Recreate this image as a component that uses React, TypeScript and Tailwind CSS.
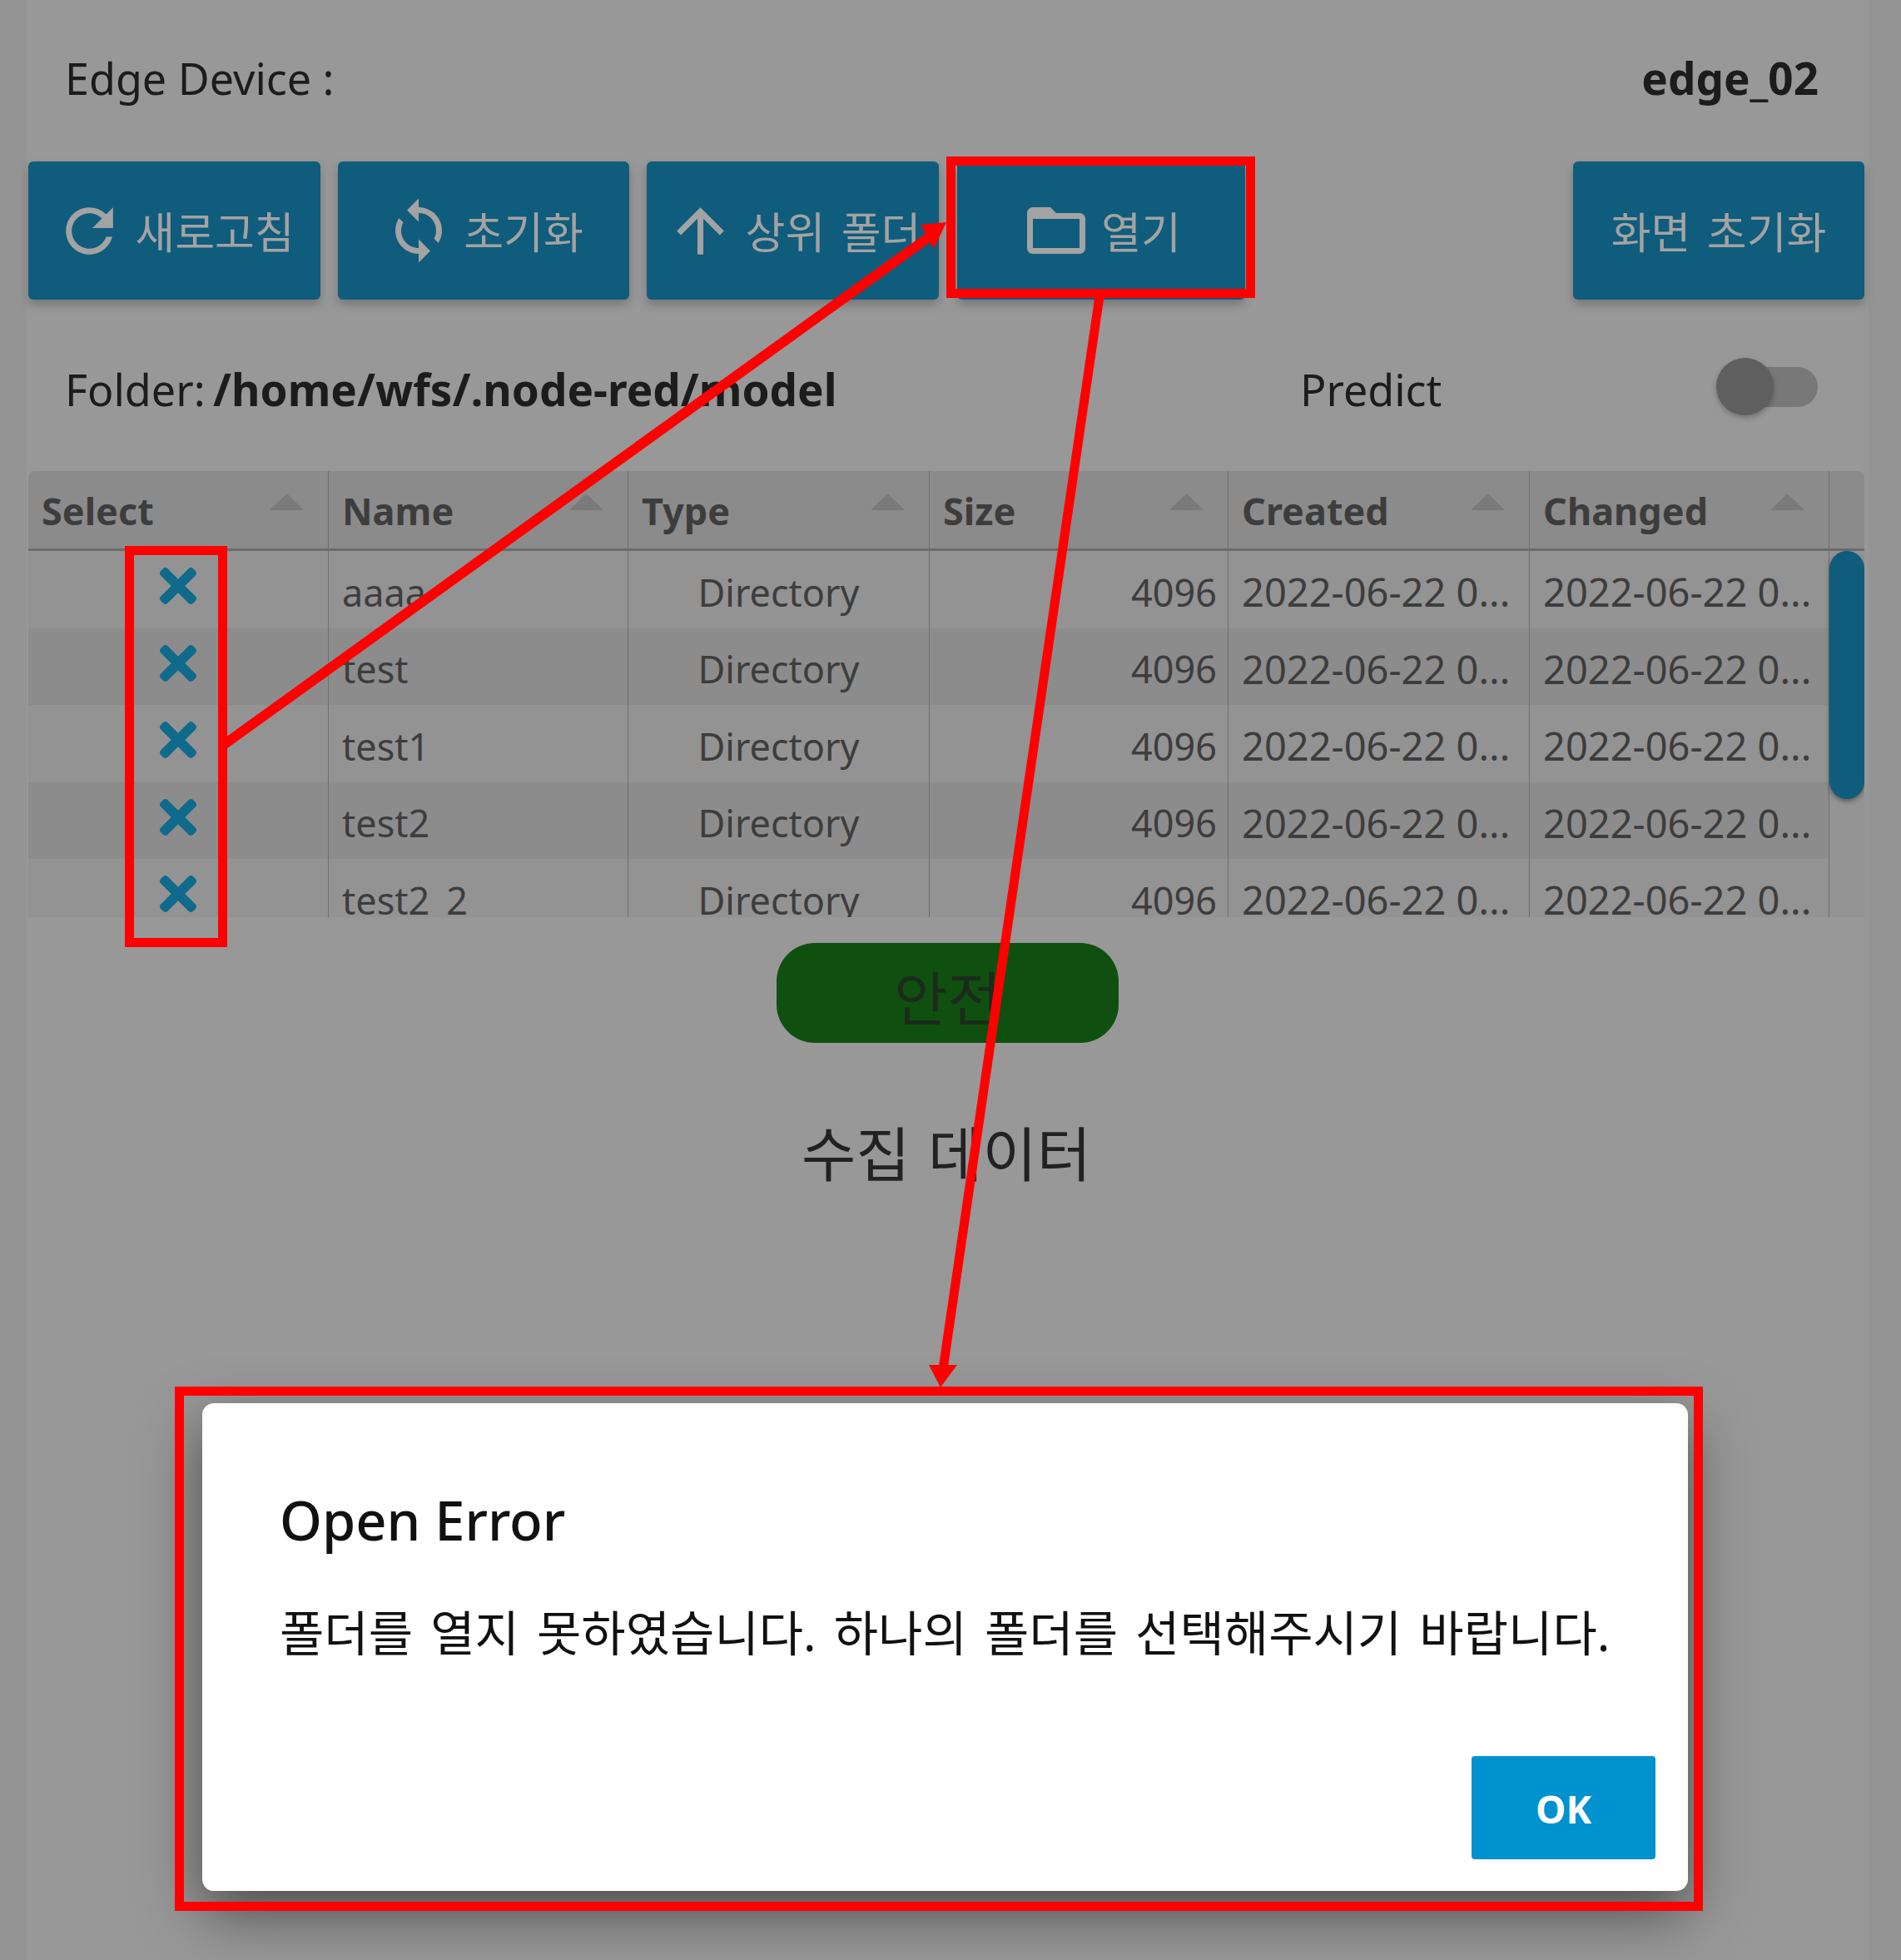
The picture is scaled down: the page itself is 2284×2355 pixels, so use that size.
import React from 'react';
import { MdRefresh, MdSync, MdArrowUpward, MdFolderOpen } from 'react-icons/md';
import { FaTimes } from 'react-icons/fa';

const columns = ['Select', 'Name', 'Type', 'Size', 'Created', 'Changed'];
const files = ['aaaa', 'test', 'test1', 'test2', 'test2_2'];
const stamp = '2022-06-22 0...';

function ToolButton({ icon, label, className }: { icon?: React.ReactNode; label: string; className: string }) {
  return (
    <button className={`h-[166px] flex items-center justify-center gap-[12px] rounded-[6px] bg-[#105c7c] text-[#a3a3a3] text-[52px] shadow-[0_6px_12px_rgba(0,0,0,0.22)] ${className}`}>
      {icon}
      <span className="pt-[3px] [word-spacing:6px]">{label}</span>
    </button>
  );
}

function SortMark() {
  return (
    <svg width="41" height="20" viewBox="0 0 41 20" className="shrink-0">
      <polygon points="20.5,0 41,20 0,20" fill="#7a7a7a" />
    </svg>
  );
}

function FileRow({ name, index }: { name: string; index: number }) {
  const bg = index % 2 ? 'bg-[#8c8c8c]' : 'bg-[#939393]';
  const cell = `h-full border-r border-[#6f6f6f] flex items-center px-[16px] pt-[6px] ${bg}`;
  return (
    <div className="grid grid-cols-[361px_360px_362px_359px_362px_360px_42px] h-[92.5px] shrink-0 bg-[#939393]">
      <div className={`h-full border-r border-[#6f6f6f] flex justify-center ${bg}`}>
        <FaTimes size={64} className="text-[#0f6a8c] mt-[10px]" />
      </div>
      <div className={cell}>{name}</div>
      <div className={`${cell} justify-center`}>Directory</div>
      <div className={`${cell} justify-end !pr-[13px]`}>4096</div>
      <div className={`${cell} whitespace-nowrap text-[47px]`}>{stamp}</div>
      <div className={`${cell} whitespace-nowrap text-[47px]`}>{stamp}</div>
      <div />
    </div>
  );
}

export default function App() {
  return (
    <div className="relative w-[2284px] h-[2355px] overflow-hidden bg-[#949494] text-[#1c1c1c] font-['Noto_Sans','Noto_Sans_CJK_KR',sans-serif]">
      <div className="mx-[32px] w-[2213px] h-full bg-[#989898] pt-[64px] pl-[2px] pr-[5px]">
        <div className="flex items-center justify-between h-[60px] pl-[44px] pr-[55px] text-[52px]">
          <span>Edge Device :</span>
          <span className="font-bold text-[53px]">edge_02</span>
        </div>

        <div className="flex mt-[70px]">
          <ToolButton icon={<MdRefresh size={85} />} label="새로고침" className="w-[351px]" />
          <ToolButton icon={<MdSync size={84} />} label="초기화" className="w-[350px] ml-[21px]" />
          <ToolButton icon={<MdArrowUpward size={85} />} label="상위 폴더" className="w-[351px] ml-[21px]" />
          <ToolButton icon={<MdFolderOpen size={84} />} label="열기" className="w-[346px] ml-[22px]" />
          <ToolButton label="화면 초기화" className="w-[350px] ml-[394px]" />
        </div>

        <div className="grid grid-cols-[1484px_1fr_auto] items-center h-[60px] mt-[76px] pl-[44px] pr-[56px] text-[52px] leading-[60px]">
          <span className="[word-spacing:-4px]">
            Folder: <b className="text-[53px]">/home/wfs/.node-red/model</b>
          </span>
          <span>Predict</span>
          <div className="relative w-[122px] h-[69px] -mt-[6px] flex items-center justify-end">
            <div className="w-[104px] h-[48px] rounded-full bg-[#787878]" />
            <div className="absolute left-0 top-0 w-[69px] h-[69px] rounded-full bg-[#5f5f5f] shadow-[0_3px_6px_rgba(0,0,0,0.25)]" />
          </div>
        </div>

        <div className="relative mt-[70px] h-[536px] overflow-hidden rounded-t-[8px] text-[#3d3d3d] text-[45px] flex flex-col">
          <div className="grid grid-cols-[361px_360px_362px_359px_362px_360px_42px] h-[96px] shrink-0 bg-[#8b8b8b] border-b-[3px] border-[#6b6b6b] font-bold">
            {columns.map((c) => (
              <div key={c} className="border-r border-[#6f6f6f] flex items-center justify-between pl-[16px] pr-[29px]">
                <span className="pt-[2px]">{c}</span>
                <div className="-mt-[20px]">
                  <SortMark />
                </div>
              </div>
            ))}
            <div />
          </div>
          {files.map((f, i) => (
            <FileRow key={f} name={f} index={i} />
          ))}
          <div className="absolute right-0 top-[96px] w-[42px] h-[298px] rounded-full bg-[#105c7c] shadow-[0_3px_5px_rgba(0,0,0,0.35)]" />
        </div>

        <div className="mt-[31px] ml-[899px] w-[411px] h-[120px] rounded-[46px] bg-[#0f5010] flex items-center justify-center pt-[14px] text-[70px] text-[#1c2a1c]">
          안전
        </div>
        <div className="mt-[83px] text-center text-[71px] leading-[100px] text-[#222222] [word-spacing:3px]">수집 데이터</div>
      </div>

      <div className="absolute left-[243px] top-[1686px] w-[1785px] h-[586px] rounded-[14px] bg-white text-black shadow-[0_26px_70px_rgba(0,0,0,0.5)]">
        <div className="pl-[93px] pt-[105px] text-[65px] leading-[70px] font-medium text-[#111111]">Open Error</div>
        <div className="pl-[93px] mt-[66px] text-[58px] leading-[70px] text-[#111111] whitespace-nowrap [word-spacing:6px]">
          폴더를 열지 못하였습니다. 하나의 폴더를 선택해주시기 바랍니다.
        </div>
        <button className="absolute right-[39px] bottom-[38px] w-[221px] h-[124px] rounded-[4px] bg-[#0092cf] text-white text-[46px] font-bold pt-[2px]">
          OK
        </button>
      </div>

      {/* annotation layer */}
      <div className="absolute left-[1137px] top-[188px] w-[371px] h-[170px] border-[11px] border-[#ff0000]" />
      <div className="absolute left-[150px] top-[656px] w-[123px] h-[482px] border-[11px] border-[#ff0000]" />
      <div className="absolute left-[210px] top-[1666px] w-[1836px] h-[630px] border-[11px] border-[#ff0000]" />
      <svg className="absolute left-0 top-0 w-[2284px] h-[2355px] pointer-events-none" viewBox="0 0 2284 2355">
        <line x1="270" y1="894" x2="1120" y2="282" stroke="#ff0000" strokeWidth="12" />
        <polygon points="1137,267 1106,270 1122,299" fill="#ff0000" />
        <line x1="1321" y1="356" x2="1133" y2="1645" stroke="#ff0000" strokeWidth="11" />
        <polygon points="1130,1667 1116,1640 1150,1640" fill="#ff0000" />
      </svg>
    </div>
  );
}
